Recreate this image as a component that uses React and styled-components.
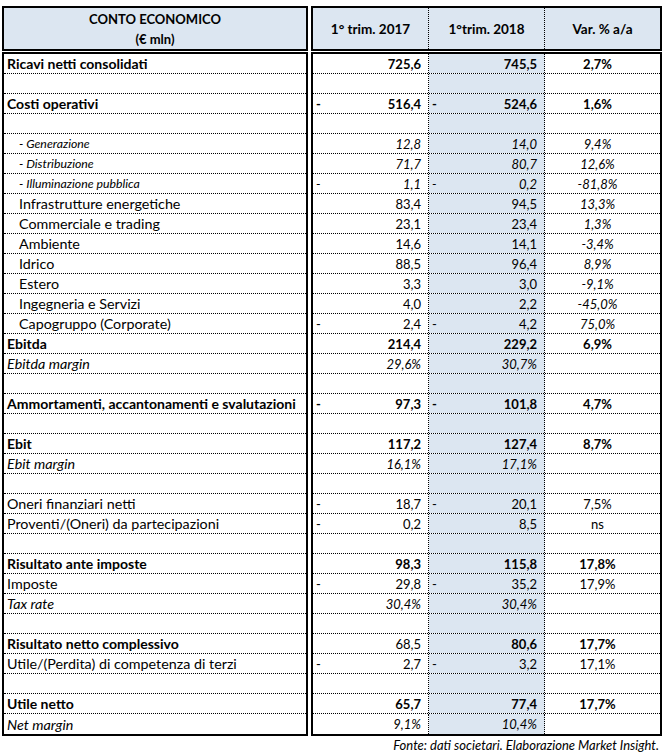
import React from 'react';
import styled, { createGlobalStyle, css } from 'styled-components';

const Global = createGlobalStyle`
    body {
        margin: 0;
        background: #fff;
        font-family: Lato, "Liberation Sans", sans-serif;
        color: #000;
    }
`;

const BLUE = '#dce6f1';

const Page = styled.div`
    width: 666px;
    padding: 6px 0 0 2px;
    box-sizing: border-box;
`;

const Grid = styled.div`
    display: grid;
    grid-template-columns: 306px 351px;
    column-gap: 3px;
    row-gap: 1px;
`;

const Box = styled.div`
    border: 2px solid #000;
    box-sizing: border-box;
`;

const HeadLeft = styled(Box)`
    height: 45px;
    background: ${BLUE};
    display: flex;
    flex-direction: column;
    align-items: center;
    justify-content: center;
    font-weight: bold;
    font-size: 13px;
    line-height: 20px;
`;

const HeadRight = styled(Box)`
    height: 45px;
    background: ${BLUE};
    display: grid;
    grid-template-columns: 116px 116px 1fr;
`;

const HeadCell = styled.div`
    display: flex;
    align-items: center;
    justify-content: center;
    font-weight: bold;
    font-size: 13.5px;
    border-right: ${p => (p.$last ? 'none' : '1px dotted #000')};
`;

const Body = styled(Box)`
    display: flex;
    flex-direction: column;
`;

const rowLine = css`
    height: 20px;
    box-sizing: border-box;
    border-bottom: 1px dotted #000;
    &:last-child {
        border-bottom: none;
    }
`;

const labelSize = p => {
    if (p.$small) return '12.3px';
    if (p.$bold) return '14px';
    return '14.3px';
};

const LabelRow = styled.div`
    ${rowLine};
    display: flex;
    align-items: center;
    padding-left: ${p => (p.$indent ? '15px' : '3px')};
    font-size: ${labelSize};
    font-weight: ${p => (p.$bold ? 'bold' : 'normal')};
    font-style: ${p => (p.$italic ? 'italic' : 'normal')};
    white-space: nowrap;
`;

const ValueRow = styled.div`
    ${rowLine};
    display: grid;
    grid-template-columns: 116px 116px 1fr;
`;

const Num = styled.div`
    display: flex;
    align-items: center;
    justify-content: space-between;
    padding: 0 7px 0 3px;
    font-size: 13px;
    font-weight: ${p => (p.$bold ? 'bold' : 'normal')};
    font-style: ${p => (p.$italic ? 'italic' : 'normal')};
    border-right: 1px dotted #000;
    background: ${p => (p.$shade ? BLUE : 'transparent')};
`;

const Var = styled.div`
    display: flex;
    align-items: center;
    justify-content: center;
    padding-right: 10px;
    font-size: 13px;
    font-weight: ${p => (p.$bold ? 'bold' : 'normal')};
    font-style: ${p => (p.$italic ? 'italic' : 'normal')};
`;

const Source = styled.div`
    width: 657px;
    text-align: right;
    font-size: 13px;
    font-style: italic;
    padding-top: 1px;
`;

// kind: total | sub | segment | margin | plain | empty
const rows = [
    { kind: 'total', label: 'Ricavi netti consolidati', a: '725,6', b: '745,5', c: '2,7%' },
    { kind: 'empty' },
    { kind: 'total', label: 'Costi operativi', a: '516,4', b: '524,6', c: '1,6%', da: true, db: true },
    { kind: 'empty' },
    { kind: 'sub', label: '- Generazione', a: '12,8', b: '14,0', c: '9,4%' },
    { kind: 'sub', label: '- Distribuzione', a: '71,7', b: '80,7', c: '12,6%' },
    { kind: 'sub', label: '- Illuminazione pubblica', a: '1,1', b: '0,2', c: '-81,8%', da: true, db: true },
    { kind: 'segment', label: 'Infrastrutture energetiche', a: '83,4', b: '94,5', c: '13,3%' },
    { kind: 'segment', label: 'Commerciale e trading', a: '23,1', b: '23,4', c: '1,3%' },
    { kind: 'segment', label: 'Ambiente', a: '14,6', b: '14,1', c: '-3,4%' },
    { kind: 'segment', label: 'Idrico', a: '88,5', b: '96,4', c: '8,9%' },
    { kind: 'segment', label: 'Estero', a: '3,3', b: '3,0', c: '-9,1%' },
    { kind: 'segment', label: 'Ingegneria e Servizi', a: '4,0', b: '2,2', c: '-45,0%' },
    { kind: 'segment', label: 'Capogruppo (Corporate)', a: '2,4', b: '4,2', c: '75,0%', da: true, db: true },
    { kind: 'total', label: 'Ebitda', a: '214,4', b: '229,2', c: '6,9%' },
    { kind: 'margin', label: 'Ebitda margin', a: '29,6%', b: '30,7%', c: '' },
    { kind: 'empty' },
    { kind: 'total', label: 'Ammortamenti, accantonamenti e svalutazioni', a: '97,3', b: '101,8', c: '4,7%', da: true, db: true },
    { kind: 'empty' },
    { kind: 'total', label: 'Ebit', a: '117,2', b: '127,4', c: '8,7%' },
    { kind: 'margin', label: 'Ebit margin', a: '16,1%', b: '17,1%', c: '' },
    { kind: 'empty' },
    { kind: 'plain', label: 'Oneri finanziari netti', a: '18,7', b: '20,1', c: '7,5%', da: true, db: true },
    { kind: 'plain', label: 'Proventi/(Oneri) da partecipazioni', a: '0,2', b: '8,5', c: 'ns', da: true },
    { kind: 'empty' },
    { kind: 'total', label: 'Risultato ante imposte', a: '98,3', b: '115,8', c: '17,8%' },
    { kind: 'plain', label: 'Imposte', a: '29,8', b: '35,2', c: '17,9%', da: true, db: true },
    { kind: 'margin', label: 'Tax rate', a: '30,4%', b: '30,4%', c: '' },
    { kind: 'empty' },
    { kind: 'total', label: 'Risultato netto complessivo', a: '68,5', b: '80,6', c: '17,7%', aPlain: true },
    { kind: 'plain', label: 'Utile/(Perdita) di competenza di terzi', a: '2,7', b: '3,2', c: '17,1%', da: true, db: true },
    { kind: 'empty' },
    { kind: 'total', label: 'Utile netto', a: '65,7', b: '77,4', c: '17,7%' },
    { kind: 'margin', label: 'Net margin', a: '9,1%', b: '10,4%', c: '' },
];

const LabelCell = ({ row }) => {
    const { kind, label } = row;
    return (
        <LabelRow
            $bold={kind === 'total'}
            $italic={kind === 'sub' || kind === 'margin'}
            $small={kind === 'sub'}
            $indent={kind === 'sub' || kind === 'segment'}>
            {label}
        </LabelRow>
    );
};

const Values = ({ row }) => {
    const { kind } = row;
    const bold = kind === 'total';
    const italic = kind === 'sub' || kind === 'margin';
    if (kind === 'empty') {
        return (
            <ValueRow>
                <Num />
                <Num $shade />
                <Var />
            </ValueRow>
        );
    }
    return (
        <ValueRow>
            <Num $bold={bold && !row.aPlain} $italic={italic}>
                <span>{row.da ? '-' : ''}</span>
                <span>{row.a}</span>
            </Num>
            <Num $bold={bold} $italic={italic} $shade>
                <span>{row.db ? '-' : ''}</span>
                <span>{row.b}</span>
            </Num>
            <Var $bold={bold} $italic={italic || kind === 'segment'}>{row.c}</Var>
        </ValueRow>
    );
};

const App = () => (
    <Page>
        <Global />
        <Grid>
            <HeadLeft>
                <div>CONTO ECONOMICO</div>
                <div>(€ mln)</div>
            </HeadLeft>
            <HeadRight>
                <HeadCell>1° trim. 2017</HeadCell>
                <HeadCell>1°trim. 2018</HeadCell>
                <HeadCell $last>Var. % a/a</HeadCell>
            </HeadRight>
            <Body>
                {rows.map((row, i) => (
                    <LabelCell key={i} row={row} />
                ))}
            </Body>
            <Body>
                {rows.map((row, i) => (
                    <Values key={i} row={row} />
                ))}
            </Body>
        </Grid>
        <Source>Fonte: dati societari. Elaborazione Market Insight.</Source>
    </Page>
);

export default App;
